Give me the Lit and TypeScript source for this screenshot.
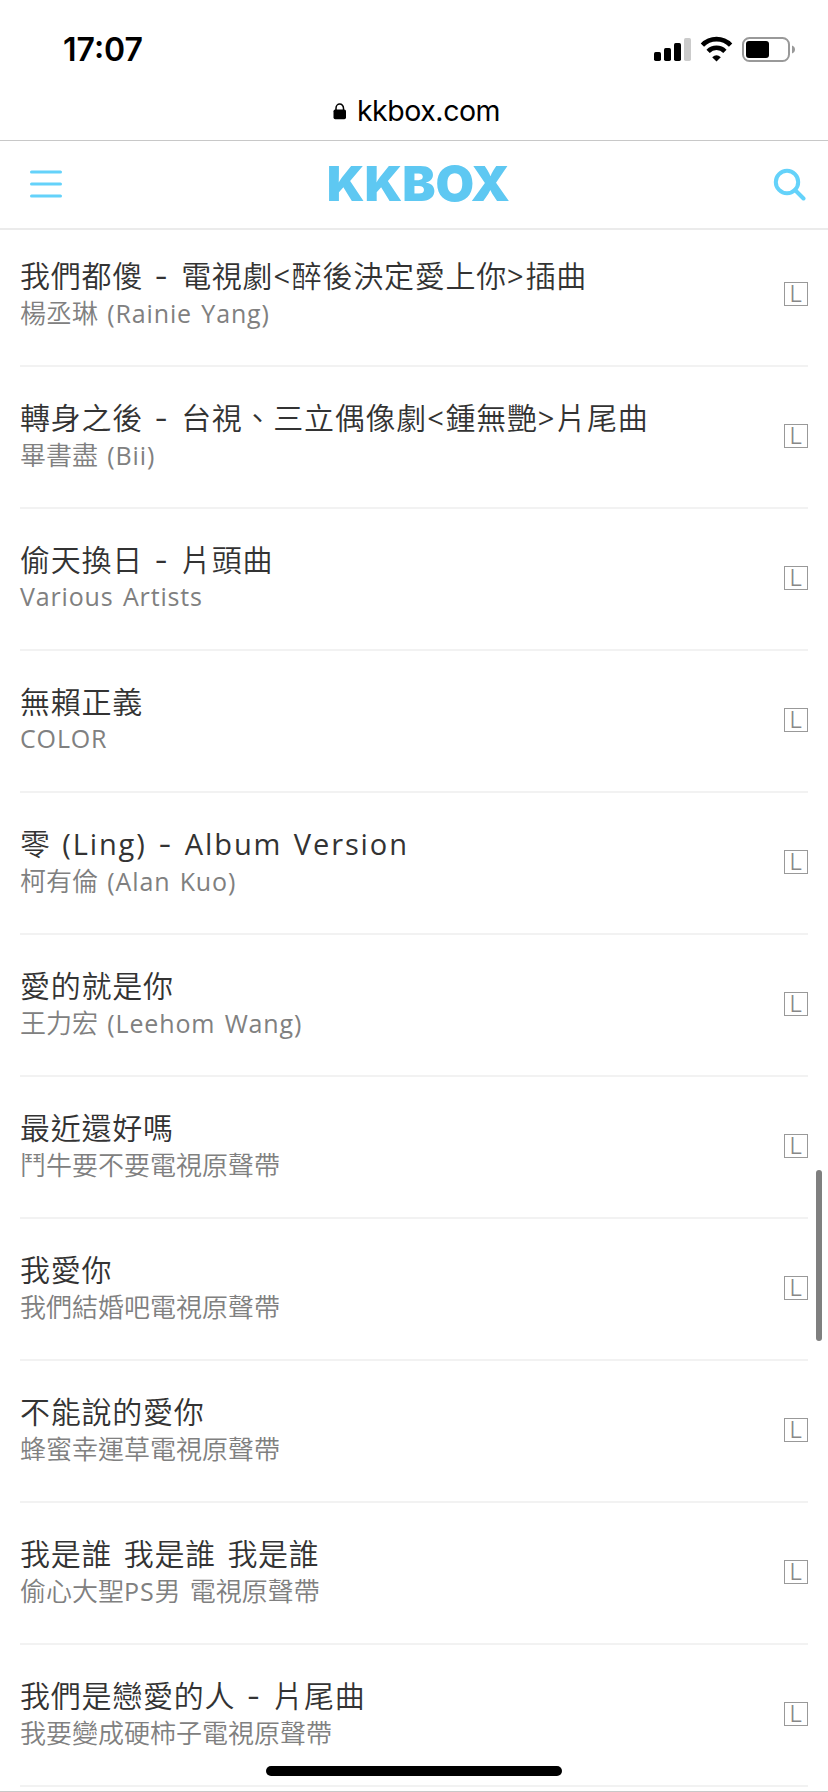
import { LitElement, html, css } from "lit";
import { customElement, property } from "lit/decorators.js";

interface Song {
  title: string;
  artist: string;
}

const SONGS: Song[] = [
  { title: "我們都傻 - 電視劇<醉後決定愛上你>插曲", artist: "楊丞琳 (Rainie Yang)" },
  { title: "轉身之後 - 台視、三立偶像劇<鍾無艷>片尾曲", artist: "畢書盡 (Bii)" },
  { title: "偷天換日 - 片頭曲", artist: "Various Artists" },
  { title: "無賴正義", artist: "COLOR" },
  { title: "零 (Ling) - Album Version", artist: "柯有倫 (Alan Kuo)" },
  { title: "愛的就是你", artist: "王力宏 (Leehom Wang)" },
  { title: "最近還好嗎", artist: "鬥牛要不要電視原聲帶" },
  { title: "我愛你", artist: "我們結婚吧電視原聲帶" },
  { title: "不能說的愛你", artist: "蜂蜜幸運草電視原聲帶" },
  { title: "我是誰 我是誰 我是誰", artist: "偷心大聖PS男 電視原聲帶" },
  { title: "我們是戀愛的人 - 片尾曲", artist: "我要變成硬柿子電視原聲帶" },
];

const runClass = (run: string) =>
  run === "-" ? "latin dash" : run.charCodeAt(0) < 128 ? "latin" : "han";

/* Han and Latin runs carry their own tracking; the dash is set wider. */
const runs = (text: string) =>
  (text.match(/-|[\x00-\x2c\x2e-\x7f]+|[^\x00-\x7f]+/g) ?? []).map(
    (run) => html`<span class=${runClass(run)}>${run}</span>`
  );

@customElement("status-bar")
export class StatusBar extends LitElement {
  static styles = css`
    :host {
      display: flex;
      justify-content: space-between;
      height: 88px;
      box-sizing: border-box;
      padding: 30px 33px 0 63px;
      font-family: Inter, "Liberation Sans", sans-serif;
      color: #000;
    }
    .time {
      font-size: 32px;
      line-height: 40px;
      font-weight: 600;
    }
    svg {
      display: block;
      margin-top: 4px;
    }
  `;
  render() {
    return html`
      <div class="time">17:07</div>
      <svg width="142" height="32" viewBox="652 34 142 32">
        <rect x="653" y="52" width="7" height="9" rx="1.7" />
        <rect x="663" y="48" width="7" height="13" rx="1.7" />
        <rect x="673" y="43" width="7" height="18" rx="1.7" />
        <rect x="683" y="38" width="7" height="23" rx="1.7" fill="#cbcbcb" />
        <g fill="none" stroke="#000" stroke-width="4.6">
          <path d="M701.400 45.200a19.500 19.500 0 0 1 28.200 0" />
          <path d="M707.100 51.300a11.800 11.800 0 0 1 16.800 0" />
        </g>
        <path d="M711.200 57.200q4.300-3.700 8.600 0l-4.300 4.300z" />
        <rect x="742" y="38" width="46" height="23" rx="6.500" fill="none" stroke="#999" stroke-width="2" />
        <rect x="745" y="41" width="23" height="17" rx="3" />
        <path d="M791 45.500q3 1.200 3 4t-3 4z" fill="#999" />
      </svg>
    `;
  }
}

@customElement("song-row")
export class SongRow extends LitElement {
  @property({ attribute: false }) song!: Song;
  static styles = css`
    :host {
      display: flex;
      justify-content: space-between;
      height: 142px;
      box-sizing: border-box;
      border-bottom: 2px solid #f2f2f2;
      padding-top: 30px;
      font-family: "Open Sans", "Noto Sans CJK TC", sans-serif;
    }
    .title,
    .artist {
      white-space: pre;
    }
    .title {
      font-size: 30px;
      line-height: 38px;
      height: 38px;
      color: #333;
    }
    .artist {
      font-size: 26px;
      line-height: 38px;
      height: 38px;
      color: #808080;
    }
    .han {
      font-family: "Noto Sans CJK TC", sans-serif;
      font-weight: 350;
    }
    .title .han {
      letter-spacing: 0.75px;
    }
    .title .latin {
      font-size: 29px;
      letter-spacing: 1.9px;
      word-spacing: 2px;
    }
    .title .dash {
      font-family: Inter, sans-serif;
    }
    .artist .latin {
      font-size: 25px;
      letter-spacing: 0.85px;
      word-spacing: 2px;
    }
    .badge {
      width: 24px;
      height: 24px;
      box-sizing: border-box;
      margin-top: 27px;
      border: 1px solid #999;
      color: #888;
      font: 300 23px/23px Inter, "Liberation Sans", sans-serif;
      text-align: center;
    }
  `;
  render() {
    return html`
      <div>
        <div class="title">${runs(this.song.title)}</div>
        <div class="artist">${runs(this.song.artist)}</div>
      </div>
      <div class="badge">L</div>
    `;
  }
}

@customElement("app-root")
export class AppRoot extends LitElement {
  static styles = css`
    :host {
      display: block;
      position: relative;
      width: 828px;
      height: 1792px;
      overflow: hidden;
      box-sizing: border-box;
      background: #fff;
    }
    .address {
      display: flex;
      justify-content: center;
      height: 53px;
      box-sizing: border-box;
      padding: 2px 0 0 5px;
      border-bottom: 1px solid #c8c8c8;
      font: 28.5px/42px Inter, "Liberation Sans", sans-serif;
      letter-spacing: -0.45px;
      color: #000;
      gap: 10px;
    }
    .lock {
      margin-top: 13px;
    }
    .nav {
      display: grid;
      grid-template-columns: 1fr auto 1fr;
      align-items: center;
      height: 89px;
      box-sizing: border-box;
      padding: 0 22px 2px 30px;
      border-bottom: 2px solid #ebebeb;
    }
    .logo {
      font: 900 48px/60px Inter, "Liberation Sans", sans-serif;
      color: #5ec8f2;
      transform: scaleX(1.038);
    }
    .search {
      justify-self: end;
      margin-top: 3px;
    }
    svg {
      display: block;
    }
    .list {
      margin: -5px 20px 0;
    }
    .scroll {
      position: absolute;
      left: 816px;
      top: 1170px;
      width: 6px;
      height: 171px;
      border-radius: 3px;
      background: #7f7f7f;
    }
    .home {
      position: absolute;
      left: 266px;
      top: 1766px;
      width: 296px;
      height: 10px;
      border-radius: 5px;
      background: #000;
    }
    .edge {
      position: absolute;
      left: 0;
      right: 0;
      bottom: 0;
      height: 1px;
      background: #c8c8c8;
    }
  `;
  render() {
    return html`
      <status-bar></status-bar>
      <div class="address">
        <svg class="lock" width="14" height="17" viewBox="0 0 14 17">
          <rect x="0.500" y="6.500" width="12.500" height="9.700" rx="1.700" />
          <path d="M3 8V5.200a3.750 4.200 0 0 1 7.500 0V8" fill="none" stroke="#000" stroke-width="1.500" />
        </svg>
        <span>kkbox.com</span>
      </div>
      <div class="nav">
        <svg width="32" height="28" viewBox="0 0 32 28" stroke="#64d2fa" stroke-width="3" stroke-linecap="round">
          <path d="M1.500 2h29M1.500 14h29M1.500 26h29" />
        </svg>
        <div class="logo">KKBOX</div>
        <svg class="search" width="34" height="34" viewBox="0 0 34 34" fill="none" stroke="#64d2fa" stroke-width="4">
          <circle cx="15" cy="14" r="11.200" />
          <path d="M23 22l8.500 8.500" stroke-linecap="round" />
        </svg>
      </div>
      <div class="list">${SONGS.map((song) => html`<song-row .song=${song}></song-row>`)}</div>
      <div class="scroll"></div>
      <div class="home"></div>
      <div class="edge"></div>
    `;
  }
}
